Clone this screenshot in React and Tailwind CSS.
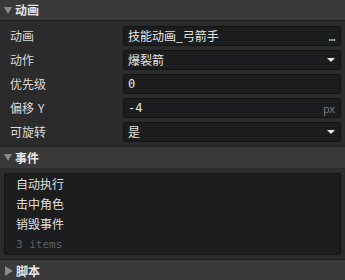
const sans = { fontFamily: '"Noto Sans CJK SC", "Noto Sans", sans-serif' };
const mono = { fontFamily: '"DejaVu Sans Mono", monospace' };

function SectionHeader({ title, open = true, border = true }) {
  return (
    <div className={`flex h-[21px] items-center bg-[#393939] ${border ? 'border-b border-[#222]' : ''}`}>
      {open ? (
        <span className="ml-[4px] mr-[3px] inline-block w-0 h-0 border-l-[4px] border-r-[4px] border-t-[7px] border-l-transparent border-r-transparent border-t-[#8a8a8a]" />
      ) : (
        <span className="ml-[5px] mr-[3px] inline-block w-0 h-0 border-t-[5px] border-b-[5px] border-l-[8px] border-t-transparent border-b-transparent border-l-[#8a8a8a]" />
      )}
      <span className="text-[12px] font-bold text-[#e6e6e6] leading-none">{title}</span>
    </div>
  );
}

function Caret() {
  return <span className="inline-block w-0 h-0 border-l-[4px] border-r-[4px] border-t-[4px] border-l-transparent border-r-transparent border-t-[#e8e8e8]" />;
}

function Row({ label, children }) {
  return (
    <div className="flex h-[20px] items-center">
      <div className="w-[123px] pl-[10px] text-[12px] text-[#dcdcdc]">{label}</div>
      <div className="flex h-[20px] flex-1 items-center rounded-[2px] border border-[#141414] bg-[#1c1d1f] pl-[4px] pr-[5px] text-[12px] text-[#e6e6e6]">
        {children}
      </div>
    </div>
  );
}

export default function App() {
  return (
    <div className="w-[345px] h-[280px] overflow-hidden bg-[#2b2b2b]" style={sans}>
      <SectionHeader title="动画" />
      <div className="flex flex-col gap-[4px] pt-[5px] pb-[4px] pr-[4px]">
        <Row label="动画">
          <span className="flex-1">技能动画_弓箭手</span>
          <span className="text-[10px] tracking-[-1px] text-[#9fb8c8] font-bold">...</span>
        </Row>
        <Row label="动作">
          <span className="flex-1">爆裂箭</span>
          <Caret />
        </Row>
        <Row label="优先级">
          <span className="flex-1" style={mono}>0</span>
        </Row>
        <Row label={<span>偏移<span className="ml-[4px]">Y</span></span>}>
          <span className="flex-1" style={mono}>-4</span>
          <span className="text-[11px] text-[#777]">px</span>
        </Row>
        <Row label="可旋转">
          <span className="flex-1">是</span>
          <Caret />
        </Row>
      </div>
      <div className="border-t border-[#222]">
        <SectionHeader title="事件" border={false} />
      </div>
      <div className="px-[4px] pt-[5px] pb-[4px]">
        <div className="h-[82px] rounded-[2px] border border-[#141414] bg-[#1c1d1f] pl-[11px] text-[12px] text-[#e0e0e0]">
          <div className="h-[20px] leading-[20px]">自动执行</div>
          <div className="h-[20px] leading-[20px]">击中角色</div>
          <div className="h-[20px] leading-[20px]">销毁事件</div>
          <div className="h-[22px] leading-[22px] text-[11px] text-[#5f5f5f]" style={mono}>3 items</div>
        </div>
      </div>
      <div className="border-t border-[#222]">
        <SectionHeader title="脚本" open={false} border={false} />
      </div>
    </div>
  );
}
